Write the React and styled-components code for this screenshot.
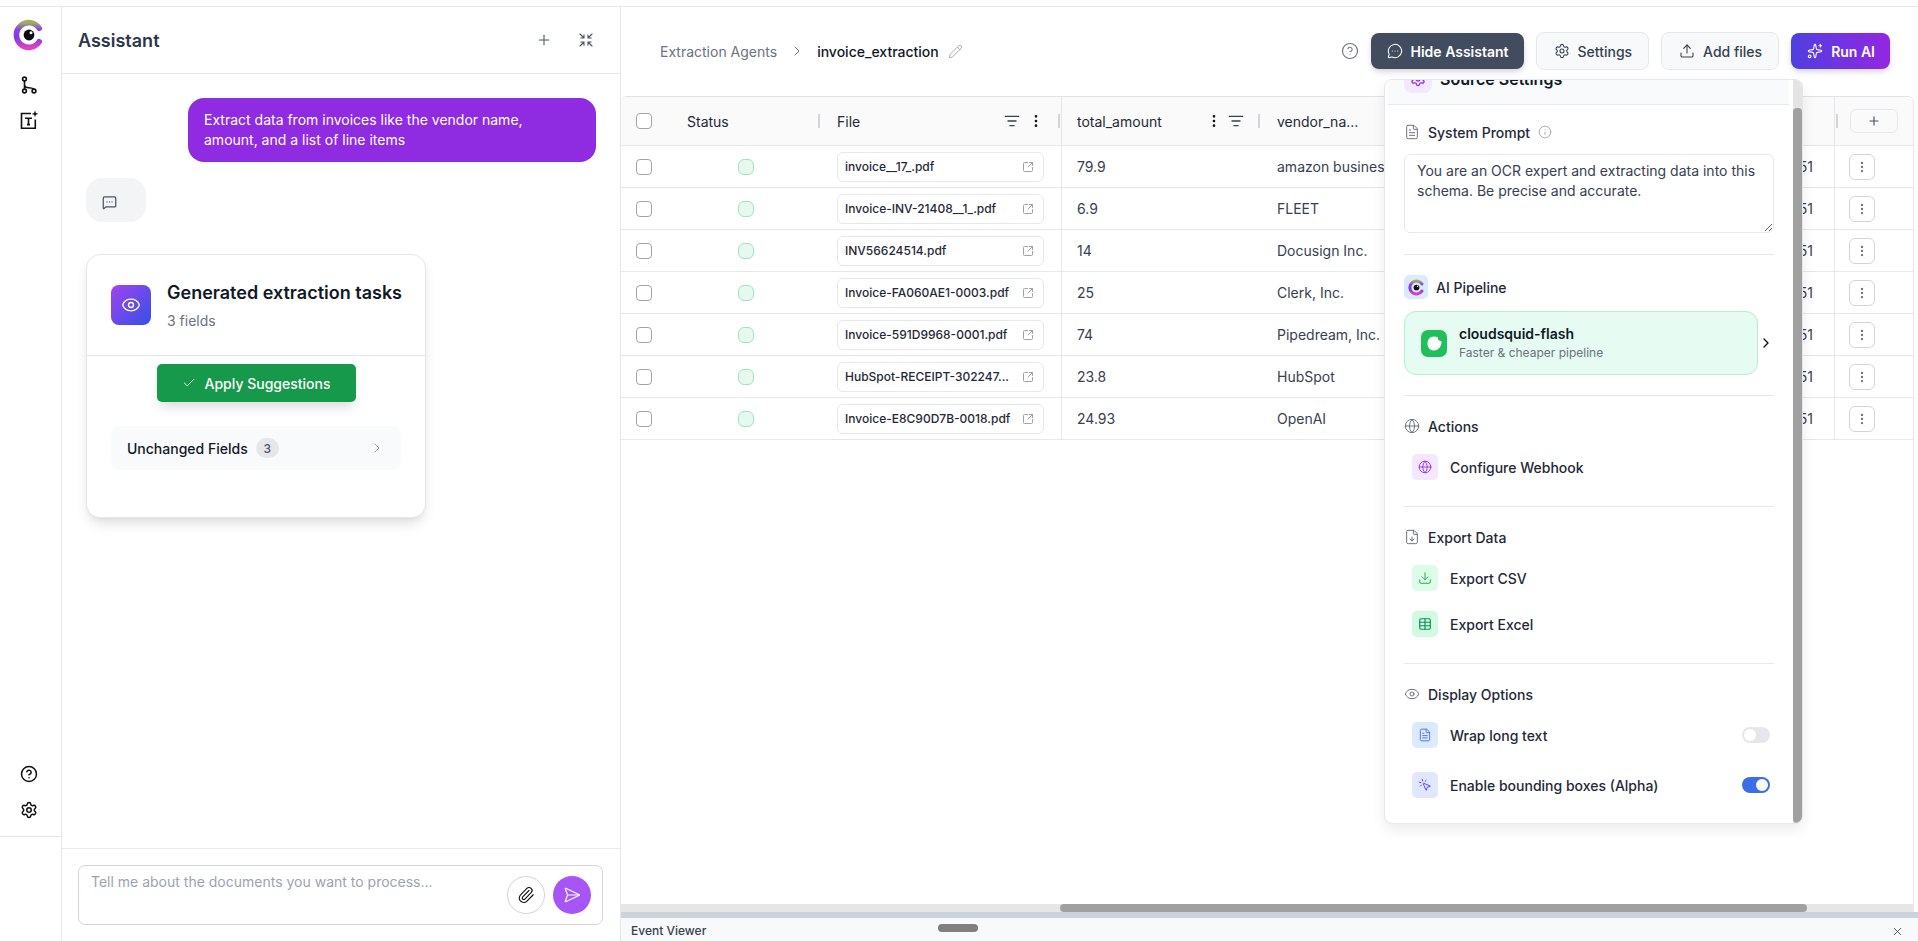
import React from 'react'
import styled, {createGlobalStyle} from 'styled-components'
import {
  Check, ChevronRight, CircleHelp, Download, EllipsisVertical, Eye, FileDown, FileText,
  Globe, Info, ListFilter, MessageCircleMore, MessageSquareMore, MousePointerClick,
  Paperclip, Pencil, Plus, SendHorizontal, Settings, Shrink, Sparkles, SquareArrowOutUpRight,
  Table, Upload, X,
} from 'lucide-react'

const GlobalStyle = createGlobalStyle`
  html, body {
    margin: 0;
    height: 100%;
    overflow: hidden;
    background: #fff;
    font-family: Inter, "Liberation Sans", sans-serif;
    color: #1f2937;
  }
  #root { height: 100%; }
  * { box-sizing: border-box; }
`

const Frame = styled.div`
  display: flex;
  height: 935px;
  margin-top: 6px;
  border-top: 1px solid #e5e7eb;
`

/* left rail */
const Rail = styled.nav`
  display: flex;
  flex-direction: column;
  flex: none;
  width: 62px;
  border-right: 1px solid #e5e7eb;
`

const NavGroup = styled.div`
  display: flex;
  flex-direction: column;
  align-items: center;
  width: 57px;
  gap: ${props => props.$gap}px;
  padding-top: ${props => props.$top || 0}px;
  padding-bottom: ${props => props.$bottom || 0}px;
`

const RailSpacer = styled.div`
  flex: 1;
`

const RailFoot = styled.div`
  height: 105px;
  border-top: 1px solid #e5e7eb;
`

const LogoSvg = ({size = 32}) => (
  <svg width={size} height={size} viewBox="0 0 32 32">
    <defs>
      <linearGradient id="ringGrad" x1="0.5" y1="0" x2="0.5" y2="1">
        <stop offset="0" stopColor="#9fb05c" />
        <stop offset="0.28" stopColor="#8b3fe8" />
        <stop offset="0.62" stopColor="#7c3aed" />
        <stop offset="1" stopColor="#e040c0" />
      </linearGradient>
    </defs>
    <path d="M26.2 9.2A12.4 12.4 0 1 0 26.2 22.8" fill="none" stroke="url(#ringGrad)" strokeWidth="5.6" strokeLinecap="round" />
    <circle cx="16" cy="16" r="5.4" fill="#0b0b10" />
    <circle cx="18" cy="13.8" r="1.5" fill="#fff" />
  </svg>
)

const BranchIcon = () => (
  <svg width="18" height="18" viewBox="0 0 18 18" fill="none" stroke="#111" strokeWidth="1.6">
    <circle cx="4.5" cy="3" r="1.9" />
    <circle cx="4.5" cy="15" r="1.9" />
    <circle cx="14" cy="15" r="1.9" />
    <path d="M4.5 5v8M4.5 8.5c0 2.4 1.6 3.2 4 3.2 2.6 0 4.4.6 5.5 1.4" />
  </svg>
)

const TextSparkIcon = () => (
  <svg width="20" height="20" viewBox="0 0 20 20" fill="none" stroke="#111" strokeWidth="1.6">
    <path d="M12 3.500H2.500v14.800h13.800V9.500" />
    <path d="M6 8.200h7M9.500 8.200v6.400M8 14.600h3" />
    <path d="M16 .6l.9 2.400 2.400.9-2.400.9-.9 2.400-.9-2.400-2.400-.9 2.400-.9z" fill="#111" stroke="none" />
  </svg>
)

/* assistant panel */
const Assistant = styled.aside`
  display: flex;
  flex-direction: column;
  flex: none;
  width: 559px;
  border-right: 1px solid #e5e7eb;
`

const AssistantHeader = styled.header`
  display: flex;
  align-items: center;
  flex: none;
  height: 67px;
  padding: 0 26px 0 16px;
  gap: 26px;
  border-bottom: 1px solid #e5e7eb;
`

const AssistantTitle = styled.h1`
  flex: 1;
  margin: 0;
  font-size: 18px;
  font-weight: 600;
  color: #2d3748;
`

const Messages = styled.div`
  flex: 1;
  padding: 24px 24px 0;
`

const UserBubble = styled.div`
  width: 408px;
  margin-left: auto;
  padding: 12px 40px 12px 16px;
  border-radius: 16px;
  background: #8f2be0;
  color: #fff;
  font-size: 14px;
  line-height: 20px;
`

const BotBubble = styled.div`
  width: 60px;
  height: 44px;
  margin-top: 16px;
  padding: 16px 0 0 16px;
  border-radius: 16px;
  background: #f3f4f6;
`

const Card = styled.section`
  width: 340px;
  margin-top: 32px;
  padding-bottom: 47px;
  border: 1px solid #e5e7eb;
  border-radius: 14px;
  background: #fff;
  box-shadow: 0 8px 14px -3px rgba(0, 0, 0, 0.12), 0 3px 6px -2px rgba(0, 0, 0, 0.06);
`

const CardHead = styled.div`
  display: flex;
  gap: 16px;
  padding: 24px 24px;
  border-bottom: 1px solid #e5e7eb;
`

const GradientTile = styled.div`
  display: flex;
  align-items: center;
  justify-content: center;
  flex: none;
  width: 40px;
  height: 40px;
  margin-top: 6px;
  border-radius: 8px;
  background: linear-gradient(135deg, #a044f0, #3550e6);
`

const CardTitle = styled.div`
  font-size: 18px;
  line-height: 28px;
  font-weight: 600;
  color: #111827;
  white-space: nowrap;
`

const CardSub = styled.div`
  margin-top: 4px;
  font-size: 14px;
  line-height: 20px;
  color: #6b7280;
`

const ApplyButton = styled.button`
  display: flex;
  align-items: center;
  justify-content: center;
  gap: 9px;
  width: 199px;
  height: 38px;
  margin: 8px auto 0;
  border: none;
  border-radius: 5px;
  background: #16994a;
  color: #fff;
  font-family: inherit;
  font-size: 14px;
  font-weight: 500;
  box-shadow: 0 8px 12px -3px rgba(0, 0, 0, 0.14);
`

const UnchangedRow = styled.div`
  display: flex;
  align-items: center;
  gap: 8px;
  height: 44px;
  margin: 24px 24px 0;
  padding: 0 16px;
  border-radius: 8px;
  background: #f9fafb;
  font-size: 14px;
  font-weight: 500;
  color: #111827;
`

const CountBadge = styled.span`
  display: flex;
  align-items: center;
  justify-content: center;
  width: 23px;
  height: 20px;
  border-radius: 10px;
  background: #e5e7eb;
  color: #4b5563;
  font-size: 12px;
`

const RowChevron = styled.span`
  display: flex;
  margin-left: auto;
`

const Composer = styled.div`
  flex: none;
  padding: 16px 17px 16px 16px;
  border-top: 1px solid #e5e7eb;
`

const ComposerBox = styled.div`
  display: flex;
  align-items: flex-end;
  gap: 8px;
  height: 60px;
  padding: 0 11px 10px 12px;
  border: 1px solid #d1d5db;
  border-radius: 7px;
`

const ComposerInput = styled.textarea`
  flex: 1;
  align-self: stretch;
  padding: 6px 0 0;
  border: none;
  outline: none;
  resize: none;
  font-family: inherit;
  font-size: 14px;
  line-height: 20px;
  &::placeholder { color: #9ca3af; }
`

const RoundButton = styled.button`
  display: flex;
  align-items: center;
  justify-content: center;
  flex: none;
  width: 38px;
  height: 38px;
  padding: 0;
  border-radius: 50%;
  border: ${props => props.$primary ? 'none' : '1px solid #d1d5db'};
  background: ${props => props.$primary ? '#a855f7' : '#fff'};
`

/* main column */
const Main = styled.main`
  position: relative;
  display: flex;
  flex-direction: column;
  flex: 1;
  min-width: 0;
`

const TopBar = styled.div`
  display: flex;
  align-items: center;
  flex: none;
  height: 89px;
  padding: 0 28px 1px 39px;
`

const Crumb = styled.span`
  font-size: 14px;
  color: #6b7280;
`

const CrumbCurrent = styled.span`
  font-size: 14px;
  font-weight: 500;
  color: #111827;
`

const CrumbGap = styled.span`
  display: flex;
  margin: 0 ${props => props.$x}px;
`

const TopActions = styled.div`
  display: flex;
  align-items: center;
  gap: 12px;
  margin-left: auto;
`

const BarButton = styled.button`
  display: flex;
  align-items: center;
  gap: 8px;
  height: ${props => props.$outline ? 38 : 36}px;
  padding: ${props => props.$outline ? '0 16px 0 17px' : '0 15px 0 16px'};
  border: ${props => props.$outline ? '1px solid #e5e7eb' : 'none'};
  border-radius: 8px;
  background: ${props => props.$bg};
  color: ${props => props.$outline ? '#374151' : '#fff'};
  font-family: inherit;
  font-size: 14px;
  font-weight: ${props => props.$outline ? 500 : 600};
  box-shadow: ${props => props.$outline ? 'none' : '0 3px 6px -1px rgba(0, 0, 0, 0.2)'};
`

const TableCard = styled.div`
  display: flex;
  flex-direction: column;
  flex: 1;
  min-height: 0;
  margin-right: 4px;
  border-top: 1px solid #e0e2e6;
  border-right: 1px solid #e5e7eb;
  border-radius: 6px 6px 0 0;
  overflow: hidden;
`

const TableBody = styled.div`
  flex: 1;
`

const TableRow = styled.div`
  display: grid;
  grid-template-columns: 50px 150px 240px 200px 200px 373px 79px;
  height: ${props => props.$head ? 49 : 42}px;
  border-bottom: 1px solid #e5e7eb;
  background: ${props => props.$head ? '#fafafa' : '#fff'};
`

const Cell = styled.div`
  display: flex;
  align-items: center;
  min-width: 0;
  padding: 0 ${props => props.$right ?? 16}px 0 ${props => props.$left ?? 16}px;
  border-left: ${props => props.$line ? '1px solid #e5e7eb' : 'none'};
  justify-content: ${props => props.$justify || 'flex-start'};
  font-size: 14px;
  color: ${props => props.$head ? '#1f2937' : '#374151'};
  white-space: nowrap;
`

const HeadLabel = styled.span`
  flex: 1;
`

const HeadIcons = styled.span`
  display: flex;
  gap: ${props => props.$gap}px;
  margin-right: 14px;
`

const Resizer = styled.span`
  flex: none;
  width: 2px;
  height: 14px;
  background: #d1d5db;
`

const CheckBox = styled.span`
  flex: none;
  width: 16px;
  height: 16px;
  border: 1px solid #a3a3a3;
  border-radius: 4px;
  background: #fff;
`

const StatusDot = styled.span`
  width: 16px;
  height: 16px;
  border: 1px solid #a0e4c4;
  border-radius: 6px;
  background: #e6f9ef;
`

const FileChip = styled.div`
  display: flex;
  align-items: center;
  justify-content: space-between;
  width: 207px;
  height: 30px;
  padding: 0 9px 0 7px;
  border: 1px solid #e5e7eb;
  border-radius: 6px;
  font-size: 12px;
  font-weight: 500;
  color: #1f2937;
`

const PlusButton = styled.button`
  display: flex;
  align-items: center;
  justify-content: center;
  width: 48px;
  height: 24px;
  margin-left: 12px;
  padding: 0;
  border: 1px solid #e5e7eb;
  border-radius: 6px;
  background: #fafafa;
`

const KebabButton = styled.button`
  display: flex;
  align-items: center;
  justify-content: center;
  width: 26px;
  height: 26px;
  padding: 0;
  border: 1px solid #d1d5db;
  border-radius: 6px;
  background: #fff;
`

const HScrollTrack = styled.div`
  display: flex;
  flex: none;
  height: 8px;
  padding-left: 439px;
  background: #e6e6e6;
`

const HScrollThumb = styled.div`
  width: 747px;
  border-radius: 4px;
  background: #a0a0a0;
`

const DragBand = styled.div`
  flex: none;
  height: 6px;
  background: #cbd2d9;
`

const EventBar = styled.div`
  display: flex;
  align-items: center;
  flex: none;
  height: 23px;
  padding: 0 14px 0 10px;
  background: #f8f9fb;
`

const EventTitle = styled.span`
  width: 307px;
  padding-top: 2px;
  font-size: 12px;
  font-weight: 500;
  color: #374151;
`

const EventHandle = styled.span`
  width: 40px;
  height: 8px;
  margin-top: -3px;
  border-radius: 4px;
  background: #808080;
`

const EventClose = styled.span`
  display: flex;
  margin-left: auto;
  padding-top: 3px;
`

/* settings popover */
const Popover = styled.div`
  position: absolute;
  top: 72px;
  left: 763px;
  display: flex;
  width: 419px;
  height: 745px;
  border: 1px solid #e5e7eb;
  border-radius: 8px;
  background: #fff;
  overflow: hidden;
  box-shadow: 0 6px 14px rgba(0, 0, 0, 0.08);
  z-index: 5;
`

const PopoverScroll = styled.div`
  flex: 1;
  min-width: 0;
  margin-top: -27px;
`

const PopoverHead = styled.div`
  display: flex;
  align-items: center;
  gap: 8px;
  height: 52px;
  margin: 0 4px 0 3px;
  padding: 0 16px;
  border-bottom: 1px solid #e5e7eb;
  background: #f9fafb;
  font-size: 16px;
  font-weight: 600;
  color: #111827;
`

const Section = styled.section`
  margin: 0 19px;
  padding: ${props => props.$top || 20}px 0 ${props => props.$bottom}px;
  border-bottom: ${props => props.$last ? 'none' : '1px solid #e5e7eb'};
`

const SectionLabel = styled.div`
  display: flex;
  align-items: center;
  gap: 8px;
  height: ${props => props.$tall ? 24 : 20}px;
  margin-bottom: ${props => props.$gap}px;
  font-size: 14px;
  font-weight: 500;
  color: #1f2937;
`

const PromptBox = styled.textarea`
  display: block;
  width: 100%;
  height: 79px;
  padding: 6px 12px;
  border: 1px solid #e5e7eb;
  border-radius: 6px;
  outline: none;
  resize: vertical;
  font-family: inherit;
  font-size: 14px;
  line-height: 20px;
  color: #374151;
`

const PipelineRow = styled.div`
  display: flex;
  align-items: center;
`

const PipelineCard = styled.div`
  display: flex;
  align-items: center;
  gap: 12px;
  width: 354px;
  height: 64px;
  padding: 0 16px;
  border: 1px solid #b4f0ce;
  border-radius: 12px;
  background: #e6fbf1;
`

const PipelineName = styled.div`
  font-size: 14px;
  line-height: 20px;
  font-weight: 600;
  color: #111827;
`

const PipelineSub = styled.div`
  font-size: 12px;
  line-height: 18px;
  color: #6b7280;
`

const Tile = styled.span`
  display: flex;
  align-items: center;
  justify-content: center;
  flex: none;
  width: ${props => props.$size || 26}px;
  height: ${props => props.$size || 26}px;
  border-radius: ${props => props.$radius || 5}px;
  background: ${props => props.$bg};
`

const ItemRow = styled.div`
  display: flex;
  align-items: center;
  gap: 12px;
  height: 26px;
  margin-top: ${props => props.$gap || 0}px;
  padding: 0 4px 0 8px;
  font-size: 14px;
  font-weight: 500;
  color: #1f2937;
`

const Toggle = styled.span`
  display: flex;
  justify-content: ${props => props.$on ? 'flex-end' : 'flex-start'};
  width: 28px;
  height: 16px;
  margin-left: auto;
  padding: 2px;
  border-radius: 8px;
  background: ${props => props.$on ? '#3b6fe8' : '#e5e7eb'};
  &::after {
    content: '';
    width: 12px;
    height: 12px;
    border-radius: 50%;
    background: #fff;
  }
`

const VScrollTrack = styled.div`
  display: flex;
  flex: none;
  width: 9px;
  padding-top: 28px;
  background: #e4e4e4;
`

const VScrollThumb = styled.div`
  flex: 1;
  border-radius: 4px;
  background: #a0a0a0;
`

const SquidIcon = () => (
  <svg width="26" height="27" viewBox="0 0 26 27">
    <rect width="26" height="27" rx="7" fill="#1fbf5c" />
    <path d="M13 6.500c1.600 0 2.900.4 3.900 1.100-.4 1.700.7 3.500 3.600 3.700.3 5-2.900 9.200-7.500 9.200-3.900 0-6.500-3.100-6.500-7.100 0-4.100 2.700-6.900 6.500-6.900z" fill="#fff" />
  </svg>
)

const files = [
  {name: 'invoice__17_.pdf', amount: '79.9', vendor: 'amazon business'},
  {name: 'Invoice-INV-21408__1_.pdf', amount: '6.9', vendor: 'FLEET'},
  {name: 'INV56624514.pdf', amount: '14', vendor: 'Docusign Inc.'},
  {name: 'Invoice-FA060AE1-0003.pdf', amount: '25', vendor: 'Clerk, Inc.'},
  {name: 'Invoice-591D9968-0001.pdf', amount: '74', vendor: 'Pipedream, Inc.'},
  {name: 'HubSpot-RECEIPT-302247...', amount: '23.8', vendor: 'HubSpot'},
  {name: 'Invoice-E8C90D7B-0018.pdf', amount: '24.93', vendor: 'OpenAI'},
]

const App = () => (
  <>
    <GlobalStyle />
    <Frame>
      <Rail>
        <NavGroup $top={12} $gap={0}><LogoSvg /></NavGroup>
        <NavGroup $top={25} $gap={16}>
          <BranchIcon />
          <TextSparkIcon />
        </NavGroup>
        <RailSpacer />
        <NavGroup $gap={18} $bottom={17}>
          <CircleHelp size={18} color="#111" />
          <Settings size={18} color="#111" />
        </NavGroup>
        <RailFoot />
      </Rail>

      <Assistant>
        <AssistantHeader>
          <AssistantTitle>Assistant</AssistantTitle>
          <Plus size={16} color="#4b5563" strokeWidth={1.6} />
          <Shrink size={16} color="#4b5563" strokeWidth={1.6} />
        </AssistantHeader>
        <Messages>
          <UserBubble>Extract data from invoices like the vendor name, amount, and a list of line items</UserBubble>
          <BotBubble><MessageSquareMore size={15} color="#4b5563" /></BotBubble>
          <Card>
            <CardHead>
              <GradientTile><Eye size={20} color="#fff" strokeWidth={1.6} /></GradientTile>
              <div>
                <CardTitle>Generated extraction tasks</CardTitle>
                <CardSub>3 fields</CardSub>
              </div>
            </CardHead>
            <ApplyButton><Check size={14} color="#fff" strokeWidth={1.5} />Apply Suggestions</ApplyButton>
            <UnchangedRow>
              Unchanged Fields
              <CountBadge>3</CountBadge>
              <RowChevron><ChevronRight size={16} color="#9ca3af" strokeWidth={1.5} /></RowChevron>
            </UnchangedRow>
          </Card>
        </Messages>
        <Composer>
          <ComposerBox>
            <ComposerInput placeholder="Tell me about the documents you want to process..." />
            <RoundButton><Paperclip size={18} color="#111" strokeWidth={1.5} /></RoundButton>
            <RoundButton $primary><SendHorizontal size={18} color="#fff" strokeWidth={1.5} /></RoundButton>
          </ComposerBox>
        </Composer>
      </Assistant>

      <Main>
        <TopBar>
          <Crumb>Extraction Agents</Crumb>
          <CrumbGap $x={12}><ChevronRight size={16} color="#6b7280" strokeWidth={1.5} /></CrumbGap>
          <CrumbCurrent>invoice_extraction</CrumbCurrent>
          <CrumbGap $x={9}><Pencil size={15} color="#9ca3af" strokeWidth={1.4} /></CrumbGap>
          <TopActions>
            <CircleHelp size={18} color="#6b7280" strokeWidth={1.5} />
            <BarButton $bg="#414c5f"><MessageCircleMore size={16} color="#fff" strokeWidth={1.6} />Hide Assistant</BarButton>
            <BarButton $outline $bg="#f8f9fb"><Settings size={16} color="#374151" strokeWidth={1.6} />Settings</BarButton>
            <BarButton $outline $bg="#f8f9fb"><Upload size={16} color="#374151" strokeWidth={1.6} />Add files</BarButton>
            <BarButton $bg="linear-gradient(90deg, #4f3fe0, #9327e0)"><Sparkles size={16} color="#fff" strokeWidth={1.6} />Run AI</BarButton>
          </TopActions>
        </TopBar>

        <TableCard>
          <TableBody>
            <TableRow $head>
              <Cell $left={15} $right={0} $head><CheckBox /></Cell>
              <Cell $right={1} $head>
                <HeadLabel>Status</HeadLabel>
                <Resizer />
              </Cell>
              <Cell $right={1} $head>
                <HeadLabel>File</HeadLabel>
                <HeadIcons $gap={8}>
                  <ListFilter size={16} color="#374151" />
                  <EllipsisVertical size={16} color="#111" />
                </HeadIcons>
                <Resizer />
              </Cell>
              <Cell $left={15} $right={1} $line $head>
                <HeadLabel>total_amount</HeadLabel>
                <HeadIcons $gap={6}>
                  <EllipsisVertical size={16} color="#111" />
                  <ListFilter size={16} color="#374151" />
                </HeadIcons>
                <Resizer />
              </Cell>
              <Cell $head>vendor_na...</Cell>
              <Cell $head />
              <Cell $left={1} $right={0} $line $head>
                <Resizer />
                <PlusButton><Plus size={14} color="#4b5563" /></PlusButton>
              </Cell>
            </TableRow>
            {files.map(file => (
              <TableRow key={file.name}>
                <Cell $left={15} $right={0}><CheckBox /></Cell>
                <Cell $justify="center"><StatusDot /></Cell>
                <Cell $right={0}>
                  <FileChip>
                    {file.name}
                    <SquareArrowOutUpRight size={12} color="#9ca3af" />
                  </FileChip>
                </Cell>
                <Cell $left={15} $line>{file.amount}</Cell>
                <Cell>{file.vendor}</Cell>
                <Cell $justify="flex-end" $right={21}>51</Cell>
                <Cell $left={14} $right={0} $line>
                  <KebabButton><EllipsisVertical size={14} color="#6b7280" /></KebabButton>
                </Cell>
              </TableRow>
            ))}
          </TableBody>
          <HScrollTrack><HScrollThumb /></HScrollTrack>
        </TableCard>
        <DragBand />
        <EventBar>
          <EventTitle>Event Viewer</EventTitle>
          <EventHandle />
          <EventClose><X size={13} color="#374151" strokeWidth={1.5} /></EventClose>
        </EventBar>

        <Popover>
          <PopoverScroll>
            <PopoverHead>
              <Tile $size={28} $radius={8} $bg="#f3e8ff"><Settings size={16} color="#9333ea" /></Tile>
              Source Settings
            </PopoverHead>
            <Section $top={17} $bottom={21}>
              <SectionLabel $gap={12}>
                <FileText size={16} color="#6b7280" strokeWidth={1.5} />
                System Prompt
                <Info size={14} color="#9ca3af" strokeWidth={1.5} />
              </SectionLabel>
              <PromptBox defaultValue="You are an OCR expert and extracting data into this schema. Be precise and accurate." />
            </Section>
            <Section $bottom={20}>
              <SectionLabel $tall $gap={12}>
                <Tile $size={24} $radius={5} $bg="#dbeafe"><LogoSvg size={17} /></Tile>
                AI Pipeline
              </SectionLabel>
              <PipelineRow>
                <PipelineCard>
                  <SquidIcon />
                  <div>
                    <PipelineName>cloudsquid-flash</PipelineName>
                    <PipelineSub>Faster &amp; cheaper pipeline</PipelineSub>
                  </div>
                </PipelineCard>
                <ChevronRight size={16} color="#111" />
              </PipelineRow>
            </Section>
            <Section $bottom={26}>
              <SectionLabel $gap={18}>
                <Globe size={16} color="#6b7280" strokeWidth={1.5} />
                Actions
              </SectionLabel>
              <ItemRow>
                <Tile $bg="#f3e8ff"><Globe size={14} color="#9333ea" strokeWidth={1.6} /></Tile>
                Configure Webhook
              </ItemRow>
            </Section>
            <Section $bottom={26}>
              <SectionLabel $gap={18}>
                <FileDown size={16} color="#6b7280" strokeWidth={1.5} />
                Export Data
              </SectionLabel>
              <ItemRow>
                <Tile $bg="#dcfce7"><Download size={14} color="#22a35a" strokeWidth={1.6} /></Tile>
                Export CSV
              </ItemRow>
              <ItemRow $gap={20}>
                <Tile $bg="#d1fae5"><Table size={14} color="#0f8f5c" strokeWidth={2} /></Tile>
                Export Excel
              </ItemRow>
            </Section>
            <Section $bottom={26} $last>
              <SectionLabel $gap={18}>
                <Eye size={16} color="#6b7280" strokeWidth={1.5} />
                Display Options
              </SectionLabel>
              <ItemRow>
                <Tile $bg="#dbeafe"><FileText size={14} color="#4f6ef0" strokeWidth={1.6} /></Tile>
                Wrap long text
                <Toggle />
              </ItemRow>
              <ItemRow $gap={24}>
                <Tile $bg="#e0e7ff"><MousePointerClick size={14} color="#5b47e8" strokeWidth={1.6} /></Tile>
                Enable bounding boxes (Alpha)
                <Toggle $on />
              </ItemRow>
            </Section>
          </PopoverScroll>
          <VScrollTrack><VScrollThumb /></VScrollTrack>
        </Popover>
      </Main>
    </Frame>
  </>
)

export default App
